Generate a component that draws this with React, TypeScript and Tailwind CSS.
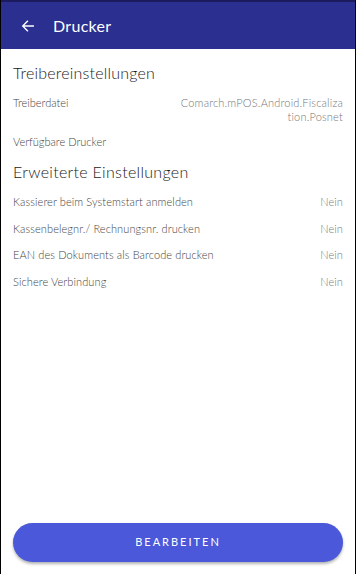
const rows = [
  "Kassierer beim Systemstart anmelden",
  "Kassenbelegnr./ Rechnungsnr. drucken",
  "EAN des Dokuments als Barcode drucken",
  "Sichere Verbindung",
];

const App = () => {
  return (
    <div
      className="w-[356px] h-[574px] flex flex-col bg-white border-x border-black"
      style={{ fontFamily: "Lato, 'Open Sans', sans-serif" }}
    >
      <div className="h-[2px] bg-[#1b1b5e]" />
      <header className="h-[47px] bg-[#2b2f8f] flex items-center px-5 gap-[18px] text-white">
        <svg width="14" height="14" viewBox="0 0 24 24" fill="none" stroke="white" strokeWidth="2.4" strokeLinecap="square">
          <path d="M21 12H4M11 4l-8 8 8 8" />
        </svg>
        <h1 className="text-[16px] font-normal tracking-[0.3px]">Drucker</h1>
      </header>
      <main className="flex-1 flex flex-col px-3">
        <h2 className="text-[16px] text-[#1a1a1a] mt-[12px] font-light tracking-[0.2px]">Treibereinstellungen</h2>
        <div className="flex justify-between mt-[11px] text-[11px] text-[#444] leading-[14px] font-light">
          <span>Treiberdatei</span>
          <span className="text-right text-[#777] tracking-[0.2px]">
            Comarch.mPOS.Android.Fiscaliza
            <br />
            tion.Posnet
          </span>
        </div>
        <div className="mt-[11px] text-[11px] text-[#444] leading-[14px] font-light">Verfügbare Drucker</div>
        <h2 className="text-[16px] text-[#1a1a1a] mt-[11px] font-light tracking-[0.3px]">Erweiterte Einstellungen</h2>
        <div className="flex flex-col mt-[5px]">
          {rows.map((r) => (
            <div key={r} className="flex justify-between h-[26.7px] items-center text-[11px] text-[#444] font-light tracking-[0.1px]">
              <span>{r}</span>
              <span className="text-[#777]">Nein</span>
            </div>
          ))}
        </div>
      </main>
      <div className="px-3 pb-3">
        <button className="w-full h-[39px] rounded-full bg-[#4a58d9] text-white text-[11px] tracking-[2px] shadow-[0_2px_3px_rgba(0,0,0,0.3)]">
          BEARBEITEN
        </button>
      </div>
    </div>
  );
};

export default App;
